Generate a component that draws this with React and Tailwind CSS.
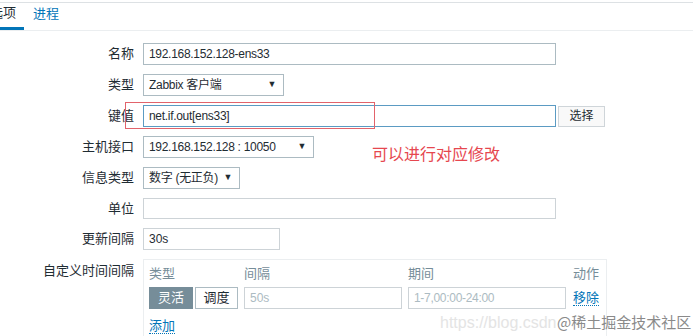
import React from "react";

const font = { fontFamily: '"Liberation Sans", Arial, "Noto Sans CJK SC", sans-serif' };

function Row({ label, children, top = false }) {
  return (
    <div className={`flex ${top ? "items-start" : "items-center"}`}>
      <div className={`w-[134px] shrink-0 text-right text-[13px] text-[#1f2c33] ${top ? "pt-[2px]" : ""}`}>{label}</div>
      <div className="ml-[9px] flex items-center">{children}</div>
    </div>
  );
}

function Select({ value, width }) {
  return (
    <div
      className="flex h-[22px] items-center justify-between whitespace-nowrap border border-[#acbbc2] bg-white pl-[5px] pr-[7px] text-[12px] tracking-[-0.3px] text-[#1f2c33]"
      style={{ width }}
    >
      <span>{value}</span>
      <span className="text-[9px]">▼</span>
    </div>
  );
}

export default function App() {
  return (
    <div className="relative h-[336px] w-[693px] overflow-hidden bg-white" style={font}>
      {/* tabs */}
      <div className="mt-[2px] border-t border-[#dde1e4]">
        <div className="flex h-[28px] items-end border-b border-[#ebeef0]">
          <div className="-ml-[10px] border-b-[3px] border-[#0275b8] pb-[5px] pr-[8px] text-[13px] text-[#1f2c33]">选项</div>
          <div className="ml-[9px] pb-[7px] text-[13px] text-[#0275b8]">进程</div>
        </div>
      </div>

      {/* form */}
      <div className="mt-[12px] flex flex-col gap-[9px]">
        <Row label="名称">
          <div className="flex h-[22px] w-[413px] items-center border border-[#acbbc2] px-[5px] text-[12px] tracking-[-0.3px] text-[#1f2c33]">192.168.152.128-ens33</div>
        </Row>
        <Row label="类型">
          <Select value="Zabbix 客户端" width={141} />
        </Row>
        <Row label="键值">
          <div className="flex h-[22px] w-[413px] items-center border border-[#5b9bc3] px-[5px] text-[12px] tracking-[-0.3px] text-[#1f2c33]">net.if.out[ens33]</div>
          <button className="ml-[2px] h-[21px] w-[47px] border border-[#cfd5d9] bg-[#f9f9f9] text-[12px] text-[#1f2c33]">选择</button>
        </Row>
        <Row label="主机接口">
          <Select value="192.168.152.128 : 10050" width={171} />
        </Row>
        <Row label="信息类型">
          <Select value="数字 (无正负)" width={97} />
        </Row>
        <Row label="单位">
          <div className="h-[21px] w-[413px] border border-[#cdd3d7]" />
        </Row>
        <Row label="更新间隔">
          <div className="flex h-[22px] w-[137px] items-center border border-[#cdd3d7] px-[5px] text-[12px] text-[#1f2c33]">30s</div>
        </Row>
        <Row label="自定义时间间隔" top>
          <div className="h-[90px] w-[464px] border border-[#ebeef0] px-[5px] pt-[4px]">
            <div className="flex text-[13px] text-[#768d99]">
              <div className="w-[95px]">类型</div>
              <div className="w-[164px]">间隔</div>
              <div className="w-[165px]">期间</div>
              <div>动作</div>
            </div>
            <div className="mt-[3px] flex items-center">
              <div className="flex h-[22px] w-[44px] items-center justify-center bg-[#768d99] text-[13px] text-white">灵活</div>
              <div className="ml-[2px] flex h-[22px] w-[43px] items-center justify-center border border-[#acbbc2] text-[13px] text-[#1f2c33]">调度</div>
              <div className="ml-[6px] flex h-[22px] w-[158px] items-center border border-[#cdd3d7] px-[5px] text-[12px] text-[#acbbc2]">50s</div>
              <div className="ml-[6px] flex h-[22px] w-[158px] items-center border border-[#cdd3d7] px-[5px] text-[12px] tracking-[-0.3px] text-[#acbbc2]">1-7,00:00-24:00</div>
              <div className="ml-[7px] border-b border-dotted border-[#0275b8] text-[13px] leading-[15px] text-[#0275b8]">移除</div>
            </div>
            <div className="mt-[9px] inline-block border-b border-dotted border-[#0275b8] text-[13px] leading-[15px] text-[#0275b8]">添加</div>
          </div>
        </Row>
      </div>

      {/* annotation */}
      <div className="absolute left-[125px] top-[102px] h-[27px] w-[250px] border border-[#e2636b]" />
      <div className="absolute left-[372px] top-[146px] text-[16px] leading-[18px] text-[#e6474f]">可以进行对应修改</div>

      {/* watermark */}
      <div className="absolute left-[440px] top-[311px] whitespace-nowrap text-[16px] text-[#e4e4e4]">https://blog.csdn</div>
      <div
        className="absolute left-[557px] top-[313px] text-[15px] leading-[18px] text-[#8a8a8a]"
        style={{ fontFamily: '"Noto Sans CJK SC", sans-serif', textShadow: "0 0 2px #fff, 0 0 2px #fff" }}
      >
        @稀土掘金技术社区
      </div>
    </div>
  );
}
